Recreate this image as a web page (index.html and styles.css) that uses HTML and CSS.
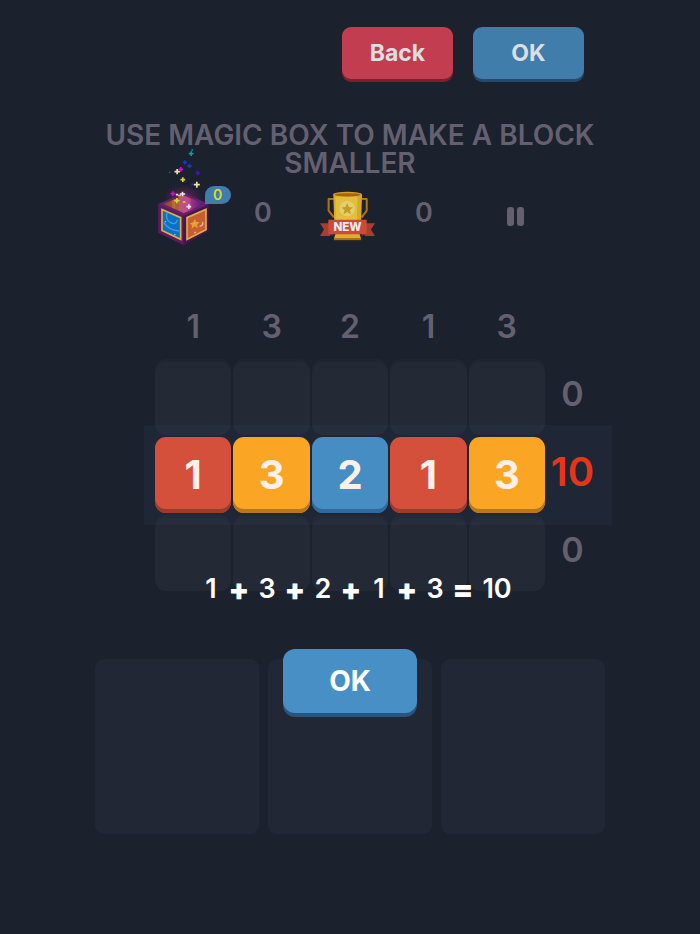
FILE: index.html
```html
<!DOCTYPE html>
<html lang="en">
<head>
    <meta charset="UTF-8">
    <meta name="viewport" content="width=device-width, initial-scale=1.0">
    <title>Magic Box Puzzle</title>
    <link rel="stylesheet" href="styles.css">
</head>
<body>
    <header class="top-bar">
        <button type="button" class="btn btn-red">Back</button>
        <button type="button" class="btn btn-blue">OK</button>
    </header>

    <main>
        <h1 class="hint">USE MAGIC BOX TO MAKE A BLOCK SMALLER</h1>

        <div class="status">
            <div class="magic-box">
                <svg class="box-icon" viewBox="38 128 152 180" aria-hidden="true">
                    <defs>
                        <linearGradient id="inside" x1="0" x2="1">
                            <stop offset="0" stop-color="#8a4a20"/>
                            <stop offset="0.35" stop-color="#a8603a"/>
                            <stop offset="0.6" stop-color="#b03d80"/>
                            <stop offset="1" stop-color="#4b1590"/>
                        </linearGradient>
                        <radialGradient id="glow">
                            <stop offset="0" stop-color="#a02a8c" stop-opacity="0.5"/>
                            <stop offset="1" stop-color="#a02a8c" stop-opacity="0"/>
                        </radialGradient>
                    </defs>
                    <!-- box -->
                    <ellipse cx="115" cy="160" rx="60" ry="36" fill="url(#glow)"/>
                    <path fill="#5d1a62" d="M38 182 115 212V306L38 268z"/>
                    <path fill="#4a1255" d="M190 182 115 212V306L190 264z"/>
                    <path fill="#682068" d="M38 182 115 148 190 182 115 218z"/>
                    <path fill="url(#inside)" d="M54 182 115 156 175 182 115 209z"/>
                    <path fill="#c8702f" opacity="0.7" d="M80 171 90 167V198L80 193z"/>
                    <path fill="#c9549a" opacity="0.6" d="M100 163 115 157 135 166V200L115 209 100 202z"/>
                    <path fill="#d9b53a" d="M47 195 108 221V292L47 263z"/>
                    <path fill="#0e6fc9" d="M52 202 103 225V284L52 260z"/>
                    <path fill="none" stroke="#3fa0dc" stroke-width="4" d="M64 208Q60 230 75 238T96 230M55 238Q68 260 101 263"/>
                    <path fill="#7fd0f5" d="M58 233h4v4h-4zM86 272h4v4h-4z"/>
                    <path fill="#d9b53a" d="M122 221 184 194V261L122 292z"/>
                    <path fill="#c95c33" d="M127 225 179 202V258L127 284z"/>
                    <path fill="#e0a530" d="M148 226 152 236 162 236 155 244 157 255 147 249 138 257 140 246 133 240 143 237z"/>
                    <path fill="none" stroke="#e6b9a0" stroke-width="4" d="M171 236Q175 247 162 249"/>
                    <path fill="#e6b9a0" d="M146 265h5v5h-5z"/>
                    <!-- sparks -->
                    <g fill="none" stroke-width="5">
                        <path stroke="#16989a" d="M130 31h14M137 24v14M138 20h5M169-36h5"/>
                        <path stroke="#1238d8" d="M112 57h12M118 51v12M125 68h14M132 61v14"/>
                        <path stroke="#4513d0" d="M150 89h14M157 82v14M137 123h6"/>
                        <path stroke="#c612c8" d="M99 78h14M106 71v14M75 151h14M82 144v14"/>
                        <path stroke="#ebe7a0" d="M87 85h16M95 77v16M145 124h18M154 115v18"/>
                        <path stroke="#d8d33a" d="M105 109h14M112 102v14M86 172h16M94 164v16M98 157h9M112 176h8"/>
                        <path stroke="#f4e6ee" d="M103 152h16M111 145v14M91 154h7M123 190h14M130 183v14"/>
                        <path stroke="#1d6655" d="M70 87h5"/>
                    </g>
                </svg>
                <span class="badge">0</span>
            </div>
            <span class="count">0</span>
            <svg class="trophy-icon" viewBox="57 35 166 150" role="img" aria-label="New record">
                <path fill="none" stroke="#b5720f" stroke-width="6" stroke-linejoin="round" d="M99 59H83V94L99 114M183 59H198V94L183 114"/>
                <path fill="#d8a928" d="M97 44H184L181 128Q178 156 155 164H126Q103 156 100 128z"/>
                <path fill="#e3be3a" d="M104 50H170L167 164H126Q106 150 104 128z"/>
                <ellipse cx="140" cy="45" rx="43" ry="8" fill="#dc9d1f"/>
                <ellipse cx="140" cy="46" rx="38" ry="5" fill="#a56412"/>
                <circle cx="139" cy="88" r="23" fill="#e2d070"/>
                <path fill="#c99a24" d="M139 71 144 83 157 84 147 92 150 105 139 98 128 105 131 92 121 84 134 83z"/>
                <path fill="#dfae2a" d="M104 163H176L181 179H99z"/>
                <path fill="#a96d10" d="M99 177H181V183H99z"/>
                <path fill="#a93d31" d="M57 132H88V170H57L69 151zM223 132H192V170H223L211 151z"/>
                <path fill="#7d2922" d="M82 164H96V170zM198 164H184V170z"/>
                <path fill="#cb4b3b" d="M82 121H198V165H82z"/>
                <text class="ribbon-text" x="140" y="156" text-anchor="middle">NEW</text>
            </svg>
            <span class="count">0</span>
            <button type="button" class="pause" aria-label="Pause"></button>
        </div>

        <section class="board">
            <div class="row sums">
                <span>1</span>
                <span>3</span>
                <span>2</span>
                <span>1</span>
                <span>3</span>
            </div>
            <div class="row">
                <div class="cell"></div>
                <div class="cell"></div>
                <div class="cell"></div>
                <div class="cell"></div>
                <div class="cell"></div>
                <span class="total">0</span>
            </div>
            <div class="row active">
                <div class="cell block red">1</div>
                <div class="cell block orange">3</div>
                <div class="cell block blue">2</div>
                <div class="cell block red">1</div>
                <div class="cell block orange">3</div>
                <span class="total">10</span>
            </div>
            <div class="row">
                <div class="cell"></div>
                <div class="cell"></div>
                <div class="cell"></div>
                <div class="cell"></div>
                <div class="cell"></div>
                <span class="total">0</span>
            </div>
            <p class="equation">
                <span>1</span>
                <b>+</b>
                <span>3</span>
                <b>+</b>
                <span>2</span>
                <b>+</b>
                <span>1</span>
                <b>+</b>
                <span>3</span>
                <b>=</b>
                <span>10</span>
            </p>
        </section>

        <section class="trays">
            <div class="tray"></div>
            <div class="tray"></div>
            <div class="tray"></div>
            <button type="button" class="btn btn-confirm">OK</button>
        </section>
    </main>
</body>
</html>
```
FILE: styles.css
```css
* {
    margin: 0;
    padding: 0;
    box-sizing: border-box;
}

body {
    min-height: 100vh;
    background: #1b212d;
    color: #656070;
    font-family: Inter, 'Liberation Sans', sans-serif;
    font-weight: 600;
}

/* buttons */
.top-bar {
    display: flex;
    justify-content: flex-end;
    gap: 20px;
    padding: 27px 116px 0;
}

.btn {
    width: 111px;
    height: 52px;
    border: none;
    border-radius: 9px;
    font-family: inherit;
    font-size: 23px;
    font-weight: 700;
    color: #dedee2;
    cursor: pointer;
}

.btn-red {
    background: #c33d50;
    box-shadow: 0 3px 0 #7d1f2d;
}

.btn-blue {
    background: #407dab;
    box-shadow: 0 3px 0 #24496b;
}

.btn-confirm {
    position: absolute;
    top: -10px;
    left: 50%;
    width: 134px;
    height: 64px;
    transform: translateX(-50%);
    border-radius: 12px;
    background: #488fc6;
    box-shadow: 0 4px 0 #29557d;
    font-size: 28px;
    color: #fff;
}

.hint {
    margin-top: 42px;
    padding: 0 100px;
    text-align: center;
    font-size: 28px;
    font-weight: 600;
    line-height: 28px;
}

/* status row */
.status {
    display: grid;
    grid-template-columns: 80fr 80fr 88fr 66fr 116fr;
    align-items: center;
    justify-items: center;
    height: 62px;
    margin: 8px 127px 0 143px;
}

.magic-box {
    position: relative;
    height: 60px;
}

.box-icon {
    display: block;
    width: 51px;
    height: 60px;
    overflow: visible;
}

.badge {
    position: absolute;
    top: 0;
    left: 47px;
    width: 26px;
    border-radius: 9px 9px 9px 0;
    background: #407dab;
    color: #d3e02c;
    font-size: 14px;
    line-height: 18px;
    text-align: center;
}

.count {
    padding-bottom: 8px;
    font-size: 27px;
}

.trophy-icon {
    width: 55px;
    height: 50px;
}

.ribbon-text {
    fill: #ecebee;
    font-size: 35px;
    font-weight: 800;
}

.pause {
    width: 17px;
    height: 19px;
    border: none;
    background: none;
    display: flex;
    justify-content: space-between;
    cursor: pointer;
}

.pause::before,
.pause::after {
    content: "";
    width: 7px;
    height: 19px;
    border-radius: 3px;
    background: #656070;
}

/* board */
.board {
    position: relative;
    margin: 64px 88px 0 144px;
    padding: 0 14px 0 11px;
}

.row {
    display: grid;
    grid-template-columns: repeat(5, 1fr) 51px;
    gap: 2px;
    margin-bottom: 2px;
}

.sums {
    margin-bottom: 16px;
    font-size: 32px;
    line-height: 32px;
    text-align: center;
}

.cell {
    height: 76px;
    border-radius: 11px;
    background: #232935;
    box-shadow: inset 0 3px 0 #20262f;
}

.total {
    display: flex;
    align-items: center;
    justify-content: center;
    padding-bottom: 8px;
    font-size: 34px;
}

.active {
    position: relative;
    z-index: 1;
}

.active::before {
    content: "";
    position: absolute;
    inset: -12px -14px -12px -11px;
    background: rgba(64, 70, 120, 0.12);
}

.active .total {
    position: relative;
    color: #e6361a;
    font-size: 40px;
}

/* the shadow is the lower edge of the block */
.block {
    position: relative;
    color: #fdf0ea;
    font-size: 40px;
    font-weight: 700;
    line-height: 76px;
    text-align: center;
}

.red {
    background: #d5503a;
    box-shadow: inset 0 -4px 0 #9c3a2c;
}

.orange {
    background: #fba524;
    box-shadow: inset 0 -4px 0 #b97817;
}

.blue {
    background: #468dc3;
    box-shadow: inset 0 -4px 0 #33689a;
}

.equation {
    position: absolute;
    z-index: 2;
    bottom: -14px;
    left: 53px;
    display: flex;
    color: #fff;
    font-size: 27px;
    line-height: 32px;
    text-align: center;
}

.equation span,
.equation b {
    width: 28px;
}

.equation b {
    font-size: 30px;
    font-weight: 900;
}

.equation span:last-child {
    width: 40px;
}

/* piece trays */
.trays {
    position: relative;
    display: grid;
    grid-template-columns: repeat(3, 1fr);
    gap: 9px;
    margin: 68px 95px 0;
    padding-bottom: 32px;
}

.tray {
    height: 175px;
    border-radius: 9px;
    background: #222735;
}
```
